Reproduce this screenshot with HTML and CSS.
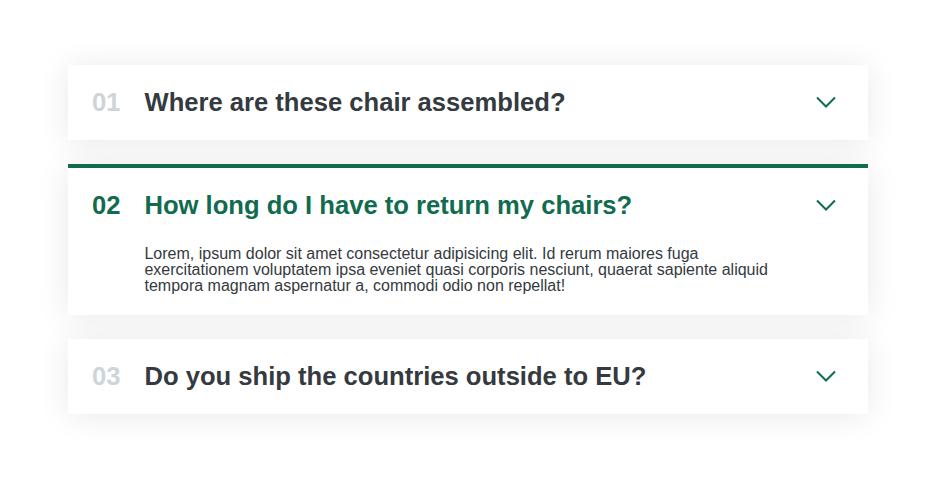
FILE: index.html
```html
<!DOCTYPE html>
<html lang="en">
<head>
<meta charset="utf-8">
<title>FAQ</title>
<link rel="stylesheet" href="styles.css">
</head>
<body>
<div class="accordion">
  <div class="item">
    <p class="number">01</p>
    <p class="title">Where are these chair assembled?</p>
    <svg class="icon" width="32" height="32" viewBox="0 0 32 32"><polyline points="5,12.5 14,21.5 23,12.5" fill="none" stroke="currentColor" stroke-width="2"/></svg>
  </div>
  <div class="item open">
    <p class="number">02</p>
    <p class="title">How long do I have to return my chairs?</p>
    <svg class="icon" width="32" height="32" viewBox="0 0 32 32"><polyline points="5,12.5 14,21.5 23,12.5" fill="none" stroke="currentColor" stroke-width="2"/></svg>
    <div class="content">Lorem, ipsum dolor sit amet consectetur adipisicing elit. Id rerum maiores fuga exercitationem voluptatem ipsa eveniet quasi corporis nesciunt, quaerat sapiente aliquid tempora magnam aspernatur a, commodi odio non repellat!</div>
  </div>
  <div class="item">
    <p class="number">03</p>
    <p class="title">Do you ship the countries outside to EU?</p>
    <svg class="icon" width="32" height="32" viewBox="0 0 32 32"><polyline points="5,12.5 14,21.5 23,12.5" fill="none" stroke="currentColor" stroke-width="2"/></svg>
  </div>
</div>
</body>
</html>
```
FILE: styles.css
```css
* { box-sizing: border-box; margin: 0; padding: 0; }
html, body { min-height: 100%; }
body {
  font-family: "Liberation Sans", Arial, sans-serif;
  color: #343a40;
  background: #fff;
  min-height: 100vh;
  padding: 65px 0 80px 68px;
}
.accordion {
  width: 800px;
  display: flex;
  flex-direction: column;
  gap: 24px;
}
.item {
  background: #fff;
  box-shadow: 0 2px 32px rgba(0, 0, 0, 0.09);
  padding: 24px;
  display: grid;
  grid-template-columns: auto 1fr auto;
  column-gap: 24px;
  row-gap: 24px;
  align-items: center;
}
.item.open {
  border-top: 4px solid #116b4e;
  padding-bottom: 21px;
}
.number {
  font-size: 25.6px;
  line-height: 27px;
  font-weight: 700;
  color: #ced4da;
}
.title {
  font-size: 25.6px;
  line-height: 27px;
  font-weight: 700;
  color: #343a40;
}
.icon {
  color: #116b4e;
  display: block;
  margin: -6px 0 -2px;
}
.open .number, .open .title { color: #116b4e; }
.content {
  grid-column: 2;
  font-size: 16px;
  line-height: 16px;
  padding-top: 3px;
  color: #343a40;
}
```
